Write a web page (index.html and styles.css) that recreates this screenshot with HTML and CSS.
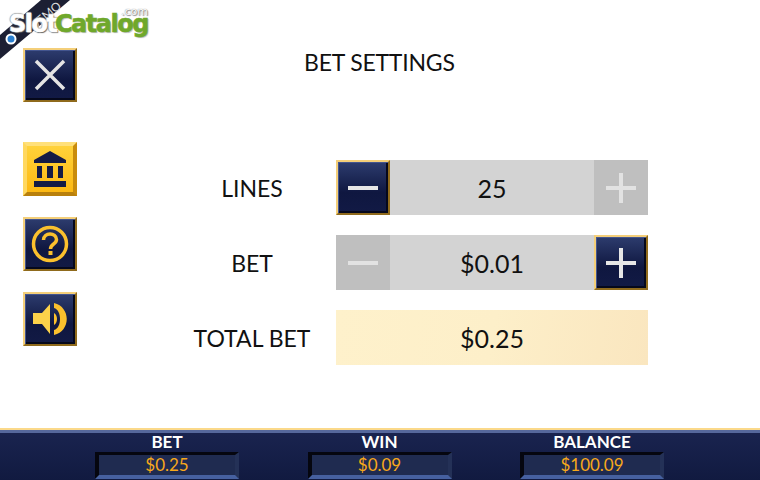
FILE: index.html
```html
<!DOCTYPE html>
<html lang="en">
  <head>
    <meta charset="UTF-8" />
    <title>Bet Settings</title>
    <link rel="stylesheet" href="styles.css">
  </head>
  <body>
    <div id="root">
      <div class="logo">
        <svg class="ribbon" width="80" height="62" viewBox="0 0 80 62">
          <polygon points="0,35 41,0 70,0 0,59" fill="#1c1f33" />
          <circle cx="11" cy="39" r="5.5" fill="#fff" />
          <circle cx="11" cy="39" r="3.5" fill="#2a7fd0" />
        </svg>
        <span class="ribbon_text">DEMO</span>
        <span class="logo_slot">Slot</span><span class="logo_catalog">Catalog</span>
        <span class="logo_com">.com</span>
      </div>
      <div class="content">
        <div class="sidebar">
          <button class="btn btn_close">
            <svg width="34" height="34" viewBox="0 0 34 34">
              <path d="M3 3 L31 31 M31 3 L3 31" stroke="#e4e4e4" stroke-width="3.5" fill="none" />
            </svg>
          </button>
          <div class="sidebar_group">
            <button class="btn btn_active">
              <svg width="34" height="36" viewBox="0 0 34 36">
                <path d="M17 0 L33 9 V12 H1 V9 Z M4 15 H9 V27 H4 Z M14 15 H20 V27 H14 Z M25 15 H30 V27 H25 Z M1 30 H33 V36 H1 Z" fill="#141b45" />
              </svg>
            </button>
            <button class="btn">
              <svg width="38" height="38" viewBox="0 0 38 38">
                <circle cx="19" cy="19" r="16.5" stroke="#fbc02d" stroke-width="3.5" fill="none" />
                <path d="M12.5 15 C12.5 7 25.5 7 25.5 14.5 C25.5 19.5 19.5 18.5 19.5 24" stroke="#fbc02d" stroke-width="3.5" fill="none" />
                <rect x="17.5" y="26" width="4" height="4" fill="#fbc02d" />
              </svg>
            </button>
            <button class="btn">
              <svg width="34" height="32" viewBox="0 0 34 32">
                <path d="M0 10 H9 L17 1 V31 L9 21 H0 Z" fill="#fcd24a" />
                <path d="M21 10 C25 12 25 20 21 22 Z" fill="#fbc02d" />
                <path d="M21 0 C38 4 38 28 21 32 L21 27 C29 25 29 7 21 5 Z" fill="#fbc02d" />
              </svg>
            </button>
          </div>
        </div>
        <div class="settings">
          <h1 class="title">BET SETTINGS</h1>
          <div class="rows">
            <div class="row">
              <div class="row_label">LINES</div>
              <div class="stepper">
                <button class="btn step_btn">
                  <svg width="30" height="30" viewBox="0 0 30 30"><path d="M0 13 H30 V17 H0 Z" fill="#e6e6e6" /></svg>
                </button>
                <div class="stepper_value">25</div>
                <div class="step_off">
                  <svg width="30" height="30" viewBox="0 0 30 30"><path d="M0 13 H13 V0 H17 V13 H30 V17 H17 V30 H13 V17 H0 Z" fill="#e2e2e2" /></svg>
                </div>
              </div>
            </div>
            <div class="row">
              <div class="row_label">BET</div>
              <div class="stepper">
                <div class="step_off">
                  <svg width="30" height="30" viewBox="0 0 30 30"><path d="M0 13 H30 V17 H0 Z" fill="#e2e2e2" /></svg>
                </div>
                <div class="stepper_value">$0.01</div>
                <button class="btn step_btn">
                  <svg width="30" height="30" viewBox="0 0 30 30"><path d="M0 13 H13 V0 H17 V13 H30 V17 H17 V30 H13 V17 H0 Z" fill="#e6e6e6" /></svg>
                </button>
              </div>
            </div>
            <div class="row">
              <div class="row_label">TOTAL BET</div>
              <div class="total">$0.25</div>
            </div>
          </div>
        </div>
      </div>
      <div class="footer">
        <div class="stat">
          <div class="stat_label">BET</div>
          <div class="stat_value">$0.25</div>
        </div>
        <div class="stat">
          <div class="stat_label">WIN</div>
          <div class="stat_value">$0.09</div>
        </div>
        <div class="stat">
          <div class="stat_label">BALANCE</div>
          <div class="stat_value">$100.09</div>
        </div>
      </div>
    </div>
  </body>
</html>
```

FILE: styles.css
```css
* {
  box-sizing: border-box;
}
body {
  margin: 0;
  background: #fff;
  font-family: "Lato", "Liberation Sans", sans-serif;
  color: #111;
}
#root {
  display: flex;
  flex-direction: column;
  width: 760px;
  height: 480px;
  overflow: hidden;
  position: relative;
}
.logo {
  position: absolute;
  left: 0;
  top: 0;
  width: 170px;
  height: 62px;
  font-family: "DejaVu Sans", sans-serif;
  font-weight: 700;
  font-size: 24px;
  letter-spacing: -1.5px;
  line-height: 30px;
}
.ribbon {
  position: absolute;
  left: 0;
  top: 0;
}
.ribbon_text {
  position: absolute;
  left: 27px;
  top: 9px;
  font-family: "Lato", sans-serif;
  font-size: 12px;
  line-height: 14px;
  font-weight: 400;
  letter-spacing: 0;
  color: #ddd;
  transform: rotate(-40deg);
}
.logo_slot {
  position: absolute;
  left: 9px;
  top: 9px;
  color: #fff;
  -webkit-text-stroke: 0.5px #fff;
  text-shadow: 1px 1px 1px #666, -1px 0 1px #999, 0 -1px 1px #aaa;
}
.logo_catalog {
  position: absolute;
  left: 55px;
  top: 9px;
  color: #6fa82b;
  -webkit-text-stroke: 0.6px #6fa82b;
  text-shadow: 1px 1px 1px #bbb;
}
.logo_com {
  position: absolute;
  left: 121px;
  top: 5px;
  font-size: 11px;
  line-height: 14px;
  font-weight: 400;
  letter-spacing: 0;
  color: #fff;
  text-shadow: 0 0 1px #666, 1px 1px 1px #888;
}
.content {
  flex: 1;
  display: flex;
  height: 428px;
}
.sidebar {
  width: 100px;
  padding: 48px 0 0 23px;
}
.sidebar_group {
  display: flex;
  flex-direction: column;
  gap: 21px;
  margin-top: 40px;
}
.btn {
  width: 54px;
  height: 54px;
  padding: 0;
  display: flex;
  justify-content: center;
  align-items: center;
  border: 2px solid;
  border-color: #f4cf7a #8f6a1c #8f6a1c #f4cf7a;
  background: linear-gradient(#2d3c6e, #0f1740 60%, #121a45);
  box-shadow: inset 1px 1px 0 #43558f, inset -2px -2px 0 #05081c;
}
.btn_active {
  border-width: 4px;
  border-color: #ffe07a #c98c0c #b9800c #ffd860;
  background: linear-gradient(#ffd23a, #fdb913);
  box-shadow: none;
}
.settings {
  flex: 1;
  display: flex;
  flex-direction: column;
  align-items: flex-start;
}
.title {
  margin: 46px 0 0 204px;
  font-size: 23px;
  line-height: 32px;
  font-weight: 400;
  letter-spacing: -0.2px;
}
.rows {
  display: flex;
  flex-direction: column;
  gap: 20px;
  margin-top: 82px;
}
.row {
  display: flex;
  align-items: center;
  height: 55px;
}
.row_label {
  width: 236px;
  padding-left: 68px;
  text-align: center;
  font-size: 23px;
}
.stepper {
  width: 312px;
  height: 55px;
  display: flex;
  background: #d3d3d3;
  align-items: center;
}
.stepper_value {
  flex: 1;
  text-align: center;
  font-size: 25px;
}
.step_off {
  width: 54px;
  height: 55px;
  display: flex;
  justify-content: center;
  align-items: center;
  background: #bfbfbf;
}
.step_btn {
  height: 55px;
}
.total {
  width: 312px;
  height: 55px;
  display: flex;
  justify-content: center;
  align-items: center;
  font-size: 25px;
  background: linear-gradient(100deg, #fef1cb, #fdefc9 50%, #fae6bf);
}
.footer {
  height: 52px;
  display: flex;
  padding-left: 95px;
  gap: 68.5px;
  background: linear-gradient(#1a2450, #111a40);
  border-top: 2px solid #fbd98a;
  box-shadow: inset 0 3px 0 #56689c;
}
.stat {
  width: 144px;
  padding-top: 2px;
  display: flex;
  flex-direction: column;
  align-items: center;
}
.stat_label {
  font-size: 17px;
  line-height: 19px;
  font-weight: 700;
  color: #fff;
}
.stat_value {
  width: 144px;
  height: 27px;
  margin-top: 1px;
  text-align: center;
  font-size: 17px;
  line-height: 20px;
  color: #f7a81b;
  background: #1f2b50;
  border-style: solid;
  border-width: 3px 4px 4px 4px;
  border-color: #05060f #243157 #46609f #05060f;
}
```
